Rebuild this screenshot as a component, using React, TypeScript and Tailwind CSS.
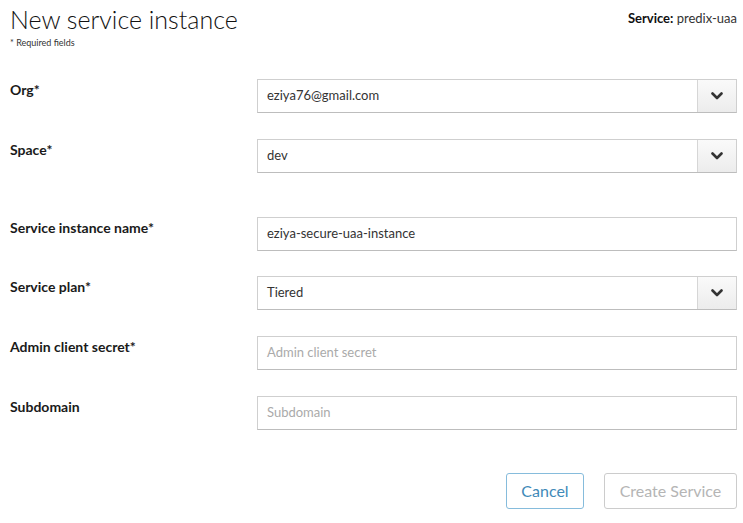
import React from "react";

const Chevron = () => (
  <svg width="12" height="8" viewBox="0 0 12 8" fill="none">
    <polyline points="1.5,1.5 6,6 10.5,1.5" stroke="#333" strokeWidth="2.6" strokeLinecap="round" strokeLinejoin="round" />
  </svg>
);

const SelectBox = ({ value }: { value: string }) => (
  <div className="flex h-[34px] w-[480px] border border-[#cfcfcf] border-b-[#bdbdbd] bg-white">
    <div className="flex flex-1 items-center pl-[9px] text-[13px] text-[#333]">{value}</div>
    <div className="flex w-[39px] items-center justify-center border-l border-[#d6d6d6] bg-gradient-to-b from-[#fafafa] to-[#ececec]">
      <Chevron />
    </div>
  </div>
);

const InputBox = ({ value, placeholder }: { value?: string; placeholder?: string }) => (
  <div className="flex h-[34px] w-[480px] items-center border border-[#cfcfcf] border-b-[#bdbdbd] bg-white pl-[9px] text-[13px]">
    {value ? <span className="text-[#333]">{value}</span> : <span className="text-[#aaa]">{placeholder}</span>}
  </div>
);

const Row = ({ label, children, mt }: { label: string; children: React.ReactNode; mt: string }) => (
  <div className={`flex ${mt}`}>
    <div className="w-[247px] pt-[2px] text-[14px] font-bold leading-[17px] text-[#1a1a1a]">{label}</div>
    {children}
  </div>
);

export default function App() {
  return (
    <div className="h-[523px] w-[743px] bg-white pl-[10px] pr-[6px]" style={{ fontFamily: "Lato, 'Open Sans', sans-serif" }}>
      <div className="flex items-start justify-between">
        <div>
          <div className="pt-[3px] text-[25px] font-light leading-[32px] text-[#111]">New service instance</div>
          <div className="mt-[2px] text-[9px] leading-[12px] text-[#333]">* Required fields</div>
        </div>
        <div className="pt-[10px] text-[13px] leading-[17px] text-[#333]">
          <span className="font-bold text-[#111]">Service:</span> predix-uaa
        </div>
      </div>

      <Row label="Org*" mt="mt-[30px]">
        <SelectBox value="eziya76@gmail.com" />
      </Row>
      <Row label="Space*" mt="mt-[26px]">
        <SelectBox value="dev" />
      </Row>
      <Row label="Service instance name*" mt="mt-[44px]">
        <InputBox value="eziya-secure-uaa-instance" />
      </Row>
      <Row label="Service plan*" mt="mt-[25px]">
        <SelectBox value="Tiered" />
      </Row>
      <Row label="Admin client secret*" mt="mt-[26px]">
        <InputBox placeholder="Admin client secret" />
      </Row>
      <Row label="Subdomain" mt="mt-[26px]">
        <InputBox placeholder="Subdomain" />
      </Row>

      <div className="mt-[43px] flex justify-end gap-[20px]">
        <button className="h-[36px] w-[78px] rounded-[3px] border border-[#86bcdc] bg-white text-[16px] text-[#3f8ab8]">Cancel</button>
        <button className="h-[36px] w-[133px] rounded-[3px] border border-[#cccccc] bg-white text-[16px] text-[#b5b5b5]">Create Service</button>
      </div>
    </div>
  );
}
